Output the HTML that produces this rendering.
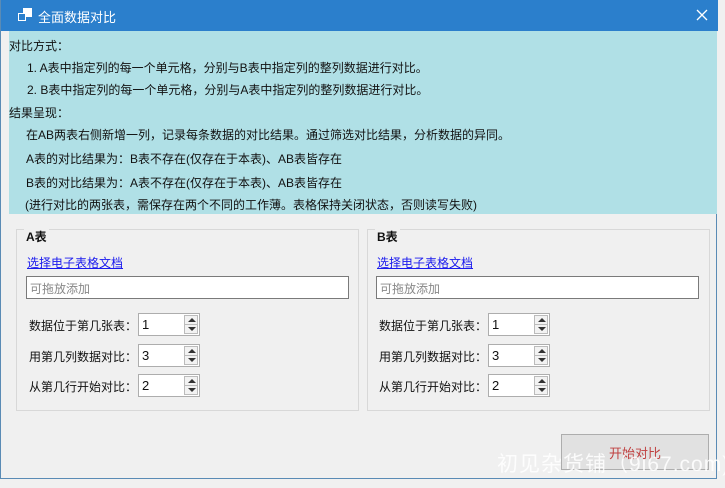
<!DOCTYPE html>
<html><head><meta charset="utf-8"><style>
*{margin:0;padding:0;box-sizing:border-box}
body{width:725px;height:488px;background:#f0f0f0;position:relative;overflow:hidden;font-family:"Liberation Sans","Noto Sans CJK SC",sans-serif;font-size:12px;color:#111}
.a{position:absolute;white-space:nowrap}
#win{position:absolute;left:0;top:0;width:717px;height:479px;border-right:1px solid #5a8bb5;border-bottom:1px solid #5a8bb5;border-left:1px solid #5a8bb5;background:#f0f0f0}
#title{position:absolute;left:0;top:0;width:717px;height:31px;background:#2b7fcc;color:#fff;font-size:13px}
#info{position:absolute;left:8px;top:31px;width:708px;height:183px;background:#b0e0e6}
.grp{position:absolute;border:1px solid #d8d8d8;width:343px;height:182px;top:229px}
.lnk{color:#1a1aee;text-decoration:underline}
.tb{position:absolute;background:#fff;border:1px solid #7a7a7a;height:23px;width:323px;color:#888;padding:3px 3px;font-size:12px}
.sp{position:absolute;background:#fff;border:1px solid #adadad;width:62px;height:23px;padding:3px 3px;font-size:13px}
.sp .ar{position:absolute;right:1px;top:1px;width:14px;height:19px;border:1px solid #bbb;background:#f2f2f2}
.sp .ar:before{content:"";position:absolute;left:3px;top:2px;border-left:4px solid transparent;border-right:4px solid transparent;border-bottom:4px solid #333}
.sp .ar:after{content:"";position:absolute;left:3px;top:11px;border-left:4px solid transparent;border-right:4px solid transparent;border-top:4px solid #333}
.sp .ar i{position:absolute;left:0;top:8px;width:12px;height:1px;background:#bbb}
</style></head><body>
<div id="win">
<div id="title">
 <svg class="a" style="left:17px;top:8px" width="14" height="14" viewBox="0 0 14 14"><rect x="5.5" y="0.5" width="8" height="8" fill="#fff" stroke="#fff"/><rect x="0.5" y="5.5" width="7" height="7" fill="#2b7fcc" stroke="#fff"/></svg>
 <div class="a" style="left:37px;top:7px">全面数据对比</div>
 <svg class="a" style="left:695px;top:9px" width="12" height="12" viewBox="0 0 12 12"><path d="M1 1L11 11M11 1L1 11" stroke="#fff" stroke-width="1.3"/></svg>
</div>
<div id="info">
 <div class="a" style="left:0;top:6px">对比方式：</div>
 <div class="a" style="left:18px;top:28px">1. A表中指定列的每一个单元格，分别与B表中指定列的整列数据进行对比。</div>
 <div class="a" style="left:18px;top:50px">2. B表中指定列的每一个单元格，分别与A表中指定列的整列数据进行对比。</div>
 <div class="a" style="left:0;top:73px">结果呈现：</div>
 <div class="a" style="left:17px;top:95px">在AB两表右侧新增一列，记录每条数据的对比结果。通过筛选对比结果，分析数据的异同。</div>
 <div class="a" style="left:17px;top:119px">A表的对比结果为：B表不存在(仅存在于本表)、AB表皆存在</div>
 <div class="a" style="left:17px;top:143px">B表的对比结果为：A表不存在(仅存在于本表)、AB表皆存在</div>
 <div class="a" style="left:16px;top:165px">(进行对比的两张表，需保存在两个不同的工作薄。表格保持关闭状态，否则读写失败)</div>
</div>
<div class="grp" style="left:15px"></div>
<div class="grp" style="left:366px"></div>
<div class="a" style="left:23px;top:228px;font-weight:bold;background:#f0f0f0;padding:0 2px">A表</div>
<div class="a" style="left:374px;top:228px;font-weight:bold;background:#f0f0f0;padding:0 2px">B表</div>
<div class="a lnk" style="left:26px;top:254px">选择电子表格文档</div>
<div class="a lnk" style="left:376px;top:254px">选择电子表格文档</div>
<div class="tb" style="left:25px;top:276px">可拖放添加</div>
<div class="tb" style="left:375px;top:276px">可拖放添加</div>
<div class="a" style="left:28px;top:317px">数据位于第几张表：</div>
<div class="a" style="left:28px;top:348px">用第几列数据对比：</div>
<div class="a" style="left:28px;top:378px">从第几行开始对比：</div>
<div class="sp" style="left:137px;top:313px">1<span class="ar"><i></i></span></div>
<div class="sp" style="left:137px;top:344px">3<span class="ar"><i></i></span></div>
<div class="sp" style="left:137px;top:374px">2<span class="ar"><i></i></span></div>
<div class="a" style="left:378px;top:317px">数据位于第几张表：</div>
<div class="a" style="left:378px;top:348px">用第几列数据对比：</div>
<div class="a" style="left:378px;top:378px">从第几行开始对比：</div>
<div class="sp" style="left:487px;top:313px">1<span class="ar"><i></i></span></div>
<div class="sp" style="left:487px;top:344px">3<span class="ar"><i></i></span></div>
<div class="sp" style="left:487px;top:374px">2<span class="ar"><i></i></span></div>
<div class="a" style="left:560px;top:434px;width:148px;height:36px;background:#e1e1e1;border:1px solid #adadad"></div>
<div class="a" style="left:608px;top:443px;color:#c04040;font-size:13px">开始对比</div>
</div>
<div class="a" style="left:497px;top:448px;color:rgba(255,255,255,0.85);font-size:21px;letter-spacing:1px">初见杂货铺（9i67.com)</div>
</body></html>
